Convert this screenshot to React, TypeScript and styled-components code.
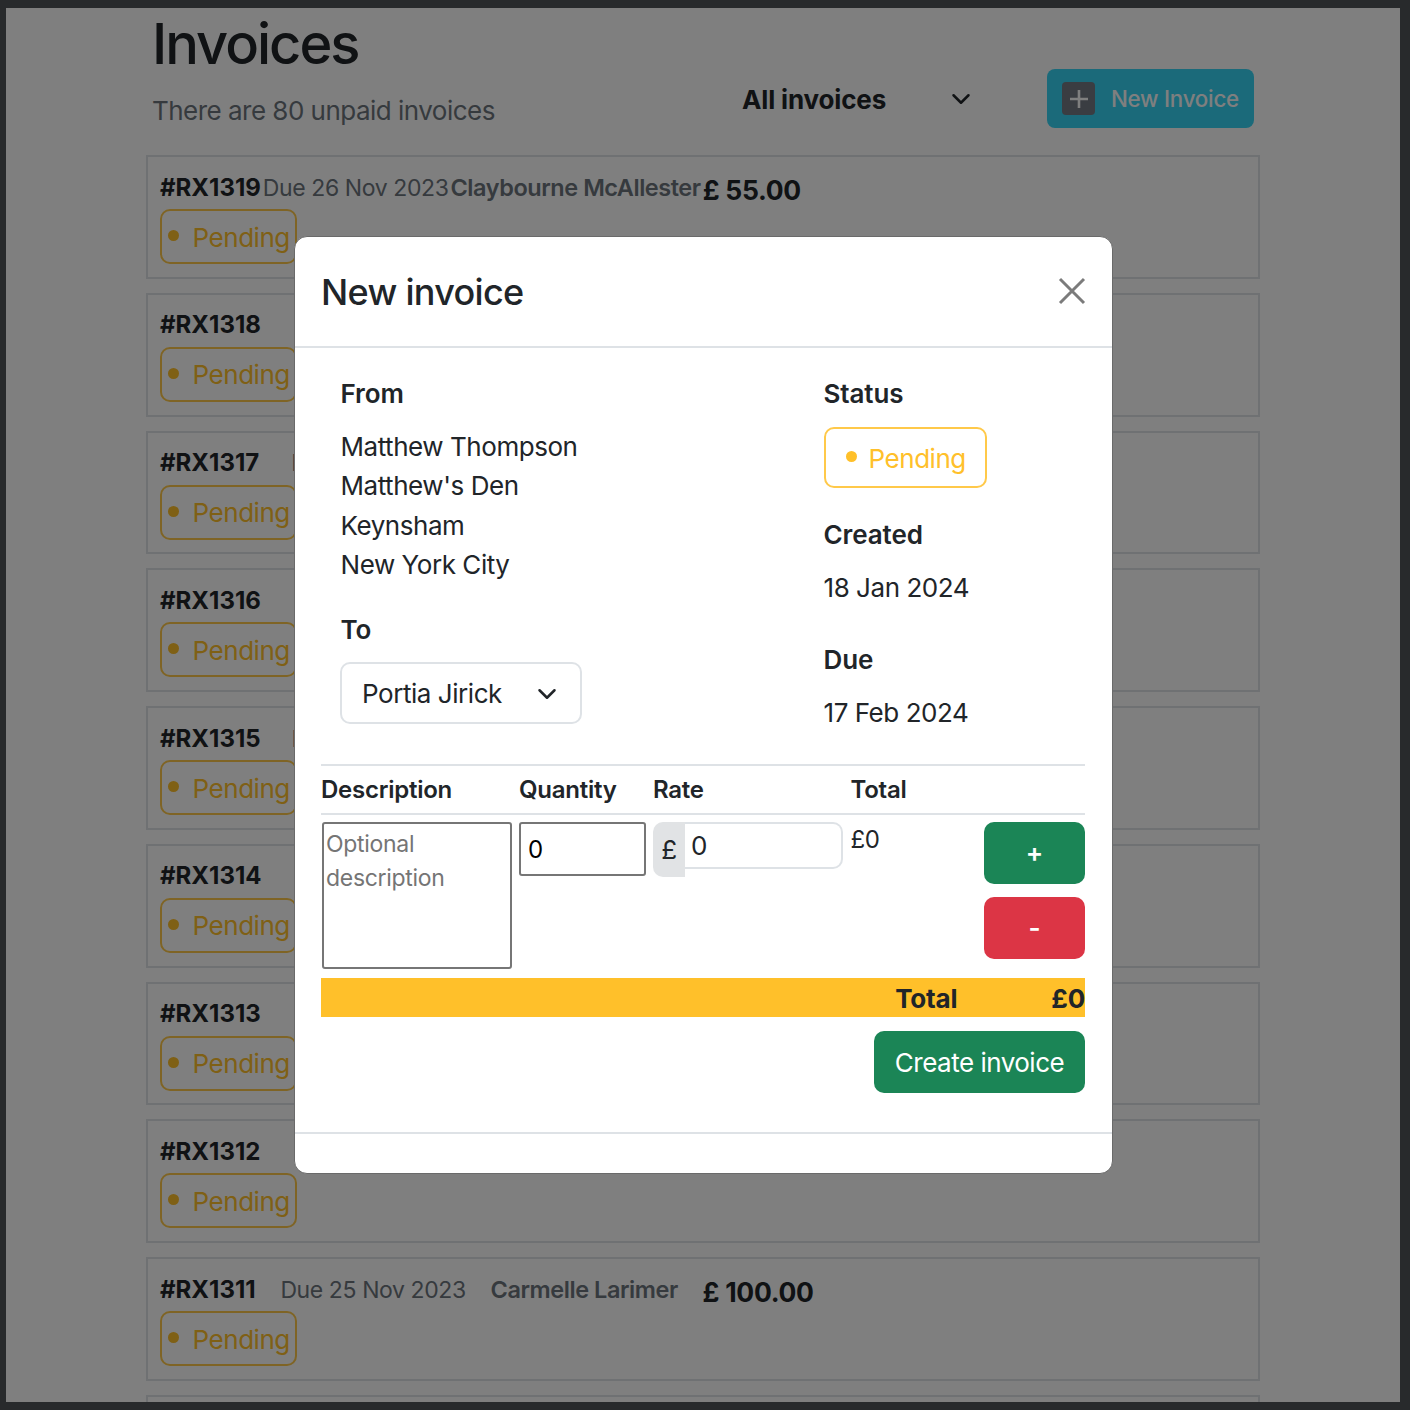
import styled, { createGlobalStyle } from "styled-components"

const GlobalStyle = createGlobalStyle`
  html, body {
    margin: 0;
    padding: 0;
    height: 1410px;
    overflow: hidden;
    background: #282a2c;
  }
  * {
    box-sizing: border-box;
  }
  body {
    font-family: Inter, "Liberation Sans", sans-serif;
    color: #212529;
    letter-spacing: -0.45px;
  }
`

const Frame = styled.div`
  position: relative;
  width: 1394px;
  height: 1394px;
  margin: 8px 0 0 6px;
  background: #fff;
  overflow: hidden;
`

const Page = styled.main`
  width: 1114px;
  margin-left: 140px;
`

const Header = styled.header`
  display: flex;
  align-items: flex-start;
  height: 147px;
  padding-left: 6px;
`

const HeaderText = styled.div`
  flex: 1;
`

const Title = styled.h1`
  margin: 0;
  height: 72px;
  font-size: 56px;
  font-weight: 500;
  line-height: 72px;
  letter-spacing: -2px;
`

const Subtitle = styled.p`
  margin: 15px 0 0;
  font-size: 26px;
  line-height: 31px;
  letter-spacing: -0.52px;
  color: #6c757d;
`

const Filter = styled.div`
  display: flex;
  align-items: center;
  justify-content: space-between;
  width: 229px;
  height: 56px;
  margin: 63px 76px 0 0;
  font-size: 26px;
  font-weight: 700;
  letter-spacing: -0.15px;
`

const NewButton = styled.button`
  display: flex;
  align-items: center;
  gap: 16px;
  width: 207px;
  height: 59px;
  margin: 61px 6px 0 0;
  padding: 0 14px 0 15px;
  border: 0;
  border-radius: 8px;
  background: #36d4f4;
  color: #fff;
  font: 500 22.3px Inter, sans-serif;
  letter-spacing: -0.25px;
  white-space: nowrap;
`

const PlusBox = styled.span`
  display: flex;
  flex-shrink: 0;
  align-items: center;
  justify-content: center;
  width: 33px;
  height: 33px;
  border-radius: 4px;
  background: #747a84;
`

const List = styled.div`
  display: flex;
  flex-direction: column;
  gap: 14px;
`

const Row = styled.article`
  height: 123.75px;
  padding: 14.5px 12px;
  border: 2px solid #dee2e6;
`

const RowTop = styled.div<{ $gap: number }>`
  display: flex;
  align-items: flex-start;
  gap: ${(p) => p.$gap}px;
  height: 37.5px;
  font-size: 24px;
  line-height: 32px;
  letter-spacing: 0;
  white-space: nowrap;
`

const InvoiceId = styled.strong`
  font-weight: 700;
`

const Due = styled.span`
  font-size: 23px;
  letter-spacing: -0.4px;
  color: #6c757d;
`

const Client = styled.strong`
  font-size: 23.5px;
  font-weight: 600;
  letter-spacing: -0.45px;
  color: #6c757d;
`

const Amount = styled.strong`
  margin-top: 2px;
  font-size: 26.5px;
  font-weight: 700;
  letter-spacing: -0.3px;
`

const Badge = styled.span<{ $large?: boolean }>`
  display: inline-flex;
  align-items: center;
  gap: ${(p) => (p.$large ? 12 : 13.5)}px;
  width: ${(p) => (p.$large ? 163 : 137)}px;
  height: ${(p) => (p.$large ? 61 : 55)}px;
  padding: 1px 0 0 ${(p) => (p.$large ? 20 : 6)}px;
  border: 2px solid #ffc94a;
  border-radius: 10px;
  font-size: 26px;
  color: #ffc02a;

  &::before {
    content: "";
    width: 11px;
    height: 11px;
    margin-top: -3px;
    border-radius: 50%;
    background: #ffc02a;
  }
`

const Backdrop = styled.div`
  position: absolute;
  inset: 0;
  background: rgba(0, 0, 0, 0.5);
`

const Modal = styled.section`
  position: absolute;
  top: 228px;
  left: 288px;
  width: 819px;
  height: 938px;
  border: 1px solid #6a6a6a;
  border-radius: 13px;
  background: #fff;
  overflow: hidden;
`

const ModalHeader = styled.div`
  display: flex;
  align-items: center;
  justify-content: space-between;
  height: 111px;
  padding: 0 27px 0 26px;
  border-bottom: 2px solid #dee2e6;
`

const ModalTitle = styled.h2`
  margin: 0;
  font-size: 36px;
  font-weight: 500;
  letter-spacing: -0.7px;
`

const CloseIcon = styled.svg`
  display: block;
  margin: -2px -1px 0 0;
`

const ModalBody = styled.div`
  height: 786px;
  padding: 0 27px 0 26px;
  border-bottom: 2px solid #dee2e6;
`

const Parties = styled.div`
  display: grid;
  grid-template-columns: 483px 1fr;
  height: 418px;
  padding: 26px 20px 0 19.5px;
  border-bottom: 2px solid #dee2e6;
`

const FieldLabel = styled.div`
  margin-bottom: 14px;
  font-size: 26px;
  font-weight: 600;
  line-height: 39px;
  letter-spacing: -0.1px;
`

const FieldText = styled.div`
  font-size: 26px;
  line-height: 39.3px;
`

const Column = styled.div`
  display: flex;
  flex-direction: column;
  align-items: flex-start;
`

const ToLabel = styled(FieldLabel)`
  margin: 26px 0 13.2px;
`

const Select = styled.div`
  display: flex;
  align-items: center;
  justify-content: space-between;
  width: 242px;
  height: 62px;
  margin-left: -0.5px;
  padding: 1px 23px 0 20px;
  border: 2px solid #dee2e6;
  border-radius: 10px;
  font-size: 26px;
`

const StatusBlock = styled.div<{ $top: number }>`
  margin-top: ${(p) => p.$top}px;
`

const ItemGrid = styled.div`
  display: grid;
  grid-template-columns: 198px 134px 197.5px 133.5px 101px;
`

const HeadCell = styled.div`
  height: 49px;
  border-bottom: 2px solid #dee2e6;
  font-size: 24px;
  font-weight: 600;
  line-height: 48px;
  letter-spacing: -0.25px;
`

const ItemCell = styled.div`
  height: 163px;
  padding-top: 7px;
`

const DescriptionInput = styled.textarea`
  display: block;
  width: 189.5px;
  height: 147px;
  margin-left: 1px;
  padding: 3px 2px;
  border: 2px solid #767676;
  border-radius: 3px;
  background: #fff;
  font: 23px/34px Inter, sans-serif;
  letter-spacing: -0.3px;
  resize: none;

  &::placeholder {
    color: #757575;
  }
`

const QuantityInput = styled.input`
  display: block;
  width: 126.5px;
  height: 54px;
  padding: 0 7px;
  border: 2px solid #767676;
  border-radius: 3px;
  font: 24px Inter, sans-serif;
  color: #000;
`

const RateGroup = styled.div`
  display: flex;
  align-items: flex-start;
  width: 190px;
`

const RateAddon = styled.span`
  display: flex;
  align-items: center;
  justify-content: center;
  width: 32px;
  height: 55px;
  border-radius: 10px 0 0 10px;
  background: #e1e3e5;
  font-size: 26px;
`

const RateInput = styled.input`
  width: 158px;
  height: 47px;
  padding: 0 6px;
  border: 2px solid #dee2e6;
  border-left: 0;
  border-radius: 0 10px 10px 0;
  font: 26px Inter, sans-serif;
  color: #212529;
`

const LineTotal = styled.div`
  font-size: 24px;
  line-height: 36px;
`

const ActionStack = styled.div`
  display: flex;
  flex-direction: column;
  gap: 13px;
`

const ActionButton = styled.button<{ $bg: string }>`
  width: 101px;
  height: 62px;
  padding-bottom: 2px;
  border: 0;
  border-radius: 10px;
  background: ${(p) => p.$bg};
  color: #fff;
  font: 600 26px Inter, sans-serif;
`

const TotalBar = styled.div`
  display: flex;
  justify-content: flex-end;
  gap: 94px;
  height: 39px;
  background: #ffc02a;
  font-size: 26px;
  font-weight: 700;
  line-height: 41px;
  letter-spacing: -0.2px;
`

const Submit = styled.div`
  display: flex;
  justify-content: flex-end;
  margin-top: 14px;
`

const CreateButton = styled.button`
  width: 211px;
  height: 62px;
  border: 0;
  border-radius: 10px;
  background: #1b8556;
  color: #fff;
  font: 26px Inter, sans-serif;
  letter-spacing: -0.5px;
`

type Invoice = {
  id: string
  due: string
  gap: number
  client?: string
  amount?: string
}

const rows: Invoice[] = [
  { id: "#RX1319", due: "Due 26 Nov 2023", client: "Claybourne McAllester", amount: "£ 55.00", gap: 2 },
  { id: "#RX1318", due: "Due 26 Nov 2023", gap: 36 },
  { id: "#RX1317", due: "Due 26 Nov 2023", gap: 32 },
  { id: "#RX1316", due: "Due 26 Nov 2023", gap: 36 },
  { id: "#RX1315", due: "Due 25 Nov 2023", gap: 31 },
  { id: "#RX1314", due: "Due 25 Nov 2023", gap: 36 },
  { id: "#RX1313", due: "Due 25 Nov 2023", gap: 36 },
  { id: "#RX1312", due: "Due 25 Nov 2023", gap: 36 },
  { id: "#RX1311", due: "Due 25 Nov 2023", client: "Carmelle Larimer", amount: "£ 100.00", gap: 24.8 },
]

const sender = ["Matthew Thompson", "Matthew's Den", "Keynsham", "New York City"]

const Chevron = ({ size }: { size: number }) => (
  <svg width={size} height={size} viewBox="0 0 16 16" fill="none">
    <path d="M2 5l6 6 6-6" stroke="#212529" strokeWidth="2" strokeLinecap="round" strokeLinejoin="round" />
  </svg>
)

const App = () => {
  return (
    <Frame>
      <GlobalStyle />
      <Page>
        <Header>
          <HeaderText>
            <Title>Invoices</Title>
            <Subtitle>There are 80 unpaid invoices</Subtitle>
          </HeaderText>
          <Filter>
            All invoices
            <Chevron size={20} />
          </Filter>
          <NewButton>
            <PlusBox>
              <svg width="20" height="20" viewBox="0 0 20 20" fill="none">
                <path d="M10 1v18M1 10h18" stroke="#fff" strokeWidth="2.6" />
              </svg>
            </PlusBox>
            New Invoice
          </NewButton>
        </Header>
        <List>
          {rows.map((row) => (
            <Row key={row.id}>
              <RowTop $gap={row.gap}>
                <InvoiceId>{row.id}</InvoiceId>
                <Due>{row.due}</Due>
                {row.client && <Client>{row.client}</Client>}
                {row.amount && <Amount>{row.amount}</Amount>}
              </RowTop>
              <Badge>Pending</Badge>
            </Row>
          ))}
          <Row />
        </List>
      </Page>
      <Backdrop />
      <Modal>
        <ModalHeader>
          <ModalTitle>New invoice</ModalTitle>
          <CloseIcon width="28" height="28" viewBox="0 0 28 28" fill="none">
            <path d="M2 2l24 24M26 2L2 26" stroke="#7b7b7b" strokeWidth="3" />
          </CloseIcon>
        </ModalHeader>
        <ModalBody>
          <Parties>
            <Column>
              <FieldLabel>From</FieldLabel>
              {sender.map((line) => (
                <FieldText key={line}>{line}</FieldText>
              ))}
              <ToLabel>To</ToLabel>
              <Select>
                Portia Jirick
                <Chevron size={20} />
              </Select>
            </Column>
            <Column>
              <FieldLabel>Status</FieldLabel>
              <Badge $large>Pending</Badge>
              <StatusBlock $top={27}>
                <FieldLabel>Created</FieldLabel>
                <FieldText>18 Jan 2024</FieldText>
              </StatusBlock>
              <StatusBlock $top={32.4}>
                <FieldLabel>Due</FieldLabel>
                <FieldText>17 Feb 2024</FieldText>
              </StatusBlock>
            </Column>
          </Parties>
          <ItemGrid>
            <HeadCell>Description</HeadCell>
            <HeadCell>Quantity</HeadCell>
            <HeadCell>Rate</HeadCell>
            <HeadCell>Total</HeadCell>
            <HeadCell />
            <ItemCell>
              <DescriptionInput placeholder="Optional description" />
            </ItemCell>
            <ItemCell>
              <QuantityInput value="0" readOnly />
            </ItemCell>
            <ItemCell>
              <RateGroup>
                <RateAddon>£</RateAddon>
                <RateInput value="0" readOnly />
              </RateGroup>
            </ItemCell>
            <ItemCell>
              <LineTotal>£0</LineTotal>
            </ItemCell>
            <ItemCell>
              <ActionStack>
                <ActionButton $bg="#1b8556">+</ActionButton>
                <ActionButton $bg="#dc3545">-</ActionButton>
              </ActionStack>
            </ItemCell>
          </ItemGrid>
          <TotalBar>
            <span>Total</span>
            <span>£0</span>
          </TotalBar>
          <Submit>
            <CreateButton>Create invoice</CreateButton>
          </Submit>
        </ModalBody>
      </Modal>
    </Frame>
  )
}

export default App
